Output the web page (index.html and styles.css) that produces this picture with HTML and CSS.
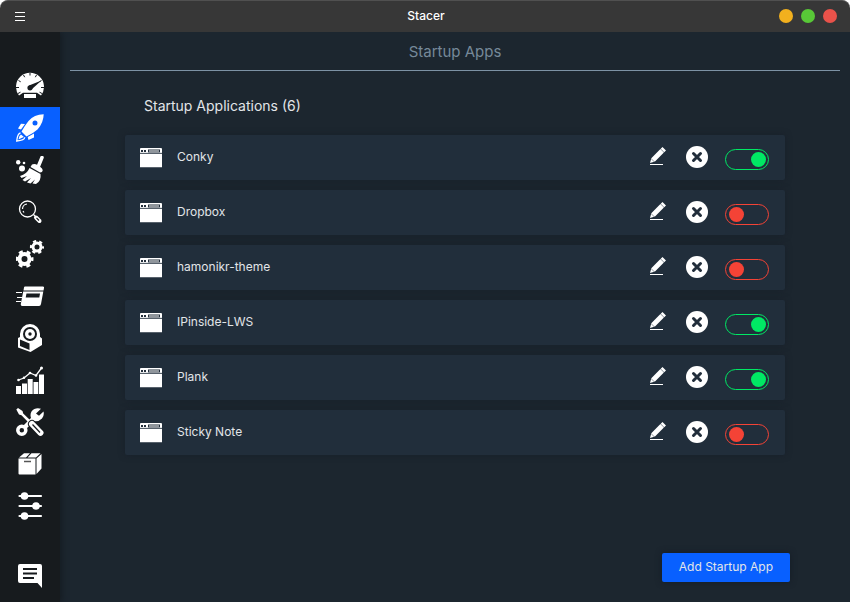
FILE: index.html
```html
<!DOCTYPE html>
<html lang="en">
<head>
<meta charset="utf-8">
<title>Stacer</title>
<link rel="stylesheet" href="styles.css">
</head>
<body>
<svg class="sprite" aria-hidden="true">
  <symbol id="window" viewBox="0 0 22 20">
    <path fill="#fff" d="M1 0H21Q22 0 22 1V5H0V1Q0 0 1 0ZM0 6H22V19H0Z"/>
    <path fill="#222e3b" d="M1 2h2v2H1zM4 2h2v2H4zM8 1.500h12v3H8z"/>
    <path fill="#fff" d="M9 2.500h10v1H9z"/>
    <path fill="#8d949b" d="M0 4.800h22v.7H0zM0 19h22v.6H0z"/>
  </symbol>
  <symbol id="pencil" viewBox="0 0 16 18">
    <path fill="#fff" d="M12.500 0 16 3.500 14.200 5.300 10.700 1.800ZM10.400 2.100 13.900 5.600 5 14.600 0 16 1.300 11.200ZM0 17h13v1H0z"/>
    <path stroke="#222e3b" stroke-width=".5" d="M1 11.500 4.500 15"/>
  </symbol>
  <symbol id="remove" viewBox="0 0 22 22">
    <circle cx="11" cy="11" r="11" fill="#fff"/>
    <path d="M7.500 7.500 14.500 14.500M14.500 7.500 7.500 14.500" stroke="#222e3b" stroke-width="3" stroke-linecap="round"/>
  </symbol>
</svg>
<header class="titlebar">
  <button class="menu" aria-label="Menu"><svg width="10" height="9" viewBox="0 0 10 9"><path d="M0 .5h10M0 4.500h10M0 8.500h10" stroke="#fff"/></svg></button>
  <h1>Stacer</h1>
  <div class="controls">
    <button class="dot minimize" aria-label="Minimize"></button>
    <button class="dot maximize" aria-label="Maximize"></button>
    <button class="dot close" aria-label="Close"></button>
  </div>
</header>
<div class="app">
  <nav class="sidebar">
    <a href="#" aria-label="Dashboard"><svg viewBox="0 0 28 28">
      <path fill="#fff" d="M3 23.500A14 14 0 1 1 25 23.500L21 20.800H7Z"/>
      <path fill="#fff" d="M8 22h12v4H8z"/>
      <path stroke="#171b1e" fill="none" d="M14 1v2.500M7.500 3l1.200 2.200M20.500 3l-1.200 2.200M2.500 8.500l2.200 1.300M25.500 8.500l-2.200 1.300M0 15.500h3M25 15.500h3M2 21.500l2.500-1.300M26 21.500l-2.500-1.300"/>
      <path fill="#171b1e" d="M13 13.500 25.500 8.500 16 17Z"/><circle cx="14" cy="15.800" r="2.600" fill="#171b1e"/>
    </svg></a>
    <a href="#" class="active" aria-label="Startup Apps" aria-current="page"><svg viewBox="0 0 28 28">
      <path fill="#fff" fill-rule="evenodd" d="M27.700.3Q18 .5 12.500 7Q8.500 12 5.500 17.500L10.500 22.500Q17 19.500 21.500 15.500Q27.500 9 27.700.3ZM19 6.500a2.500 2.500 0 1 1 0 5a2.500 2.500 0 1 1 0-5Z"/>
      <path fill="#fff" d="M9 10 5 9.700 2 14.500 5 15.500ZM18 19.500V23.500L12.500 26 11.700 23Z"/>
      <path fill="none" stroke="#fff" stroke-width="1.300" d="M4.500 19Q1.500 19.500.7 27Q8.500 26.500 8.800 23.300"/>
      <path fill="#fff" d="M5 20.500 8 23 5.500 24 2.500 25.500 3.500 22Z"/>
    </svg></a>
    <a href="#" aria-label="System Cleaner"><svg viewBox="0 0 28 28">
      <path d="M26 1.500 22.500 10" stroke="#fff" stroke-width="3.500" stroke-linecap="round"/>
      <path fill="#fff" d="M16 8.500Q20 6.500 26 12.500Q27.500 14 26 16L24 16.500 14.500 11ZM13.500 12 24.500 18Q25.500 25 20 28L16.500 27.500 19 23.500 14.500 27.500 11 26.500 15 22 9 25.500 6.500 24 11 20 5.500 22 4 20Q11 18 13.500 12Z"/>
      <circle cx="2.200" cy="6.200" r="2.200" fill="#fff"/><circle cx="8" cy="7" r="1.300" fill="#fff"/><circle cx="6" cy="12.500" r="3" fill="#fff"/>
    </svg></a>
    <a href="#" aria-label="Search"><svg viewBox="0 0 28 28">
      <circle cx="11.500" cy="11" r="8" fill="none" stroke="#fff" stroke-width="1.300"/>
      <path d="M6.500 11a5 5 0 0 1 4.500-5M7 13l1 1.500M17.500 16.500l2 2" fill="none" stroke="#fff" stroke-width="1.200"/>
      <path d="M20 19.500 23.500 23" stroke="#fff" stroke-width="4" stroke-linecap="round"/><path d="M20.500 19.800 23 22.500" stroke="#171b1e" stroke-width="1.200"/>
    </svg></a>
    <a href="#" aria-label="Services"><svg viewBox="0 0 28 28">
      <g fill="none" stroke="#fff"><circle cx="8.500" cy="19" r="5" stroke-width="4"/><circle cx="8.500" cy="19" r="7.500" stroke-width="3" stroke-dasharray="3.930 3.924" stroke-dashoffset="-5.900"/>
      <circle cx="21" cy="7" r="4" stroke-width="3"/><circle cx="21" cy="7" r="6" stroke-width="2.200" stroke-dasharray="3.150 3.133" stroke-dashoffset="-4.700"/></g>
    </svg></a>
    <a href="#" aria-label="Processes"><svg viewBox="0 0 28 28">
      <path fill="#fff" d="M9 4.500H27Q28.500 4.500 28 6L27.500 8.500H7.500L8 5.500Q8.200 4.500 9 4.500ZM7.200 9.500H27.300L25 22Q24.700 24 23 24H6Q4.500 24 4.800 22Z"/>
      <path fill="#171b1e" d="M10.500 11.500H24L23.300 15.500H9.700Z"/>
      <path stroke="#fff" d="M0 10.500h6M1 15.500h5M0 19.500h5"/>
    </svg></a>
    <a href="#" aria-label="Uninstaller"><svg viewBox="0 0 28 28">
      <path fill="#fff" d="M4 13V10a10 10 0 0 1 20 0v3l2 1.500V21l-11.500 7L2 23.500V14Z"/>
      <circle cx="14" cy="10" r="7" fill="#171b1e"/><circle cx="14" cy="10" r="5" fill="#fff"/><circle cx="14" cy="10" r="1.700" fill="#171b1e"/>
      <path fill="#fff" d="M3 14 14 18.500 25 13.500 23 20 14 25Z"/><path fill="#171b1e" d="M4 15.500 13.500 19.500V26L4 22Z"/>
    </svg></a>
    <a href="#" aria-label="Resources"><svg viewBox="0 0 28 28">
      <path fill="#fff" d="M0 20h5v8H0zM6 17.500h5V28H6zM11.700 13h5v15h-5zM17.500 16h4.800v12h-4.800zM23 8.500h5V28h-5z"/>
      <path fill="none" stroke="#fff" stroke-width="1.300" d="M2.500 14 8 12 14 7 20 9.500 25.500 2"/>
      <g fill="#fff"><circle cx="2.500" cy="14" r="1.300"/><circle cx="8" cy="11.800" r="1.200"/><circle cx="14" cy="7" r="1.300"/><circle cx="20" cy="9.500" r="1.300"/><circle cx="25.500" cy="2" r="1.500"/></g>
    </svg></a>
    <a href="#" aria-label="Helpers"><svg viewBox="0 0 28 28">
      <path d="M8 20 20 8" stroke="#fff" stroke-width="4.500"/>
      <circle cx="5.800" cy="22.200" r="4" fill="none" stroke="#fff" stroke-width="3.500"/>
      <path fill="#fff" d="M25 .7Q19 -1 15.500 3.500Q13.500 7 15.500 11L18 13Q22.500 14 26 10.500Q28.500 7.500 27.500 3.500L23 7.800 20 5.500Z"/>
      <path fill="#fff" d="M.3 1.500 2 0 6.500 3 7.200 5.500 14 12 12 14 5.500 7.200 3 6.500Z"/>
      <path d="M16 16 24.500 24.800" stroke="#171b1e" stroke-width="8" stroke-linecap="round"/>
      <path d="M16 16 24.500 24.800" stroke="#fff" stroke-width="6" stroke-linecap="round"/>
      <path d="M16.500 16.500 24 24.500" stroke="#171b1e" stroke-width="1.200"/>
    </svg></a>
    <a href="#" aria-label="Package Manager"><svg viewBox="0 0 28 28">
      <path fill="#fff" d="M2.500 8.500H19.500V24.500H3.500Q2.500 24.500 2.500 23.500ZM20.500 8.500 25.500 4V18.500L20.500 24ZM3 7.500 8 3.200H14L10 7.500ZM15.500 3.200H24.500L20 7.500H11.500Z"/>
      <path stroke="#555" stroke-width="1.500" d="M8 11.500h7"/>
    </svg></a>
    <a href="#" aria-label="Settings"><svg viewBox="0 0 28 28">
      <path stroke="#fff" stroke-width="2.200" stroke-linecap="round" d="M3.500 4H25M3.500 14H25M3.500 24H25"/>
      <circle cx="8.500" cy="4" r="3.800" fill="#fff"/><circle cx="20" cy="14" r="3.800" fill="#fff"/><circle cx="8.500" cy="24" r="3.800" fill="#fff"/>
    </svg></a>
    <a href="#" class="feedback" aria-label="Feedback"><svg viewBox="0 0 28 28">
      <path fill="#fff" d="M4 3H24Q26 3 26 5V27L21.500 22H4Q2 22 2 20V5Q2 3 4 3Z"/>
      <path stroke="#171b1e" stroke-width="2" d="M7 8h14M7 12.500h14M7 17h11"/>
    </svg></a>
  </nav>
  <main>
    <h2>Startup Apps</h2>
    <section class="content">
      <h3>Startup Applications (6)</h3>
      <ul>
        <li><svg class="window"><use href="#window"/></svg><label for="a1">Conky</label><button class="edit" aria-label="Edit Conky"><svg><use href="#pencil"/></svg></button><button class="remove" aria-label="Remove Conky"><svg><use href="#remove"/></svg></button><input id="a1" type="checkbox" checked></li>
        <li><svg class="window"><use href="#window"/></svg><label for="a2">Dropbox</label><button class="edit" aria-label="Edit Dropbox"><svg><use href="#pencil"/></svg></button><button class="remove" aria-label="Remove Dropbox"><svg><use href="#remove"/></svg></button><input id="a2" type="checkbox"></li>
        <li><svg class="window"><use href="#window"/></svg><label for="a3">hamonikr-theme</label><button class="edit" aria-label="Edit hamonikr-theme"><svg><use href="#pencil"/></svg></button><button class="remove" aria-label="Remove hamonikr-theme"><svg><use href="#remove"/></svg></button><input id="a3" type="checkbox"></li>
        <li><svg class="window"><use href="#window"/></svg><label for="a4">IPinside-LWS</label><button class="edit" aria-label="Edit IPinside-LWS"><svg><use href="#pencil"/></svg></button><button class="remove" aria-label="Remove IPinside-LWS"><svg><use href="#remove"/></svg></button><input id="a4" type="checkbox" checked></li>
        <li><svg class="window"><use href="#window"/></svg><label for="a5">Plank</label><button class="edit" aria-label="Edit Plank"><svg><use href="#pencil"/></svg></button><button class="remove" aria-label="Remove Plank"><svg><use href="#remove"/></svg></button><input id="a5" type="checkbox" checked></li>
        <li><svg class="window"><use href="#window"/></svg><label for="a6">Sticky Note</label><button class="edit" aria-label="Edit Sticky Note"><svg><use href="#pencil"/></svg></button><button class="remove" aria-label="Remove Sticky Note"><svg><use href="#remove"/></svg></button><input id="a6" type="checkbox"></li>
      </ul>
    </section>
    <button class="add">Add Startup App</button>
  </main>
</div>
</body>
</html>
```
FILE: styles.css
```css
* { box-sizing: border-box; }
html { background: #fff; }
body {
  margin: 0;
  min-height: 100vh;
  display: flex;
  flex-direction: column;
  font: 12px/20px Inter, "Noto Sans", sans-serif;
  color: #e2e5e8;
}
h1, h2, h3, ul { margin: 0; padding: 0; }
button { border: 0; padding: 0; background: none; font: inherit; color: inherit; }
svg { display: block; }
.sprite { position: absolute; width: 0; height: 0; }

.titlebar {
  height: 32px;
  display: grid;
  grid-template-columns: 1fr auto 1fr;
  align-items: center;
  padding: 0 13px 1px 15px;
  background: #373737;
  border-top: 1px solid #505050;
  border-radius: 8px 8px 0 0;
}
.titlebar h1 { font-size: 12px; font-weight: 500; color: #fff; }
.menu { justify-self: start; }
.controls { justify-self: end; display: flex; gap: 8px; }
.dot { width: 14px; height: 14px; border-radius: 50%; }
.minimize { background: #f2b01e; }
.maximize { background: #58c837; }
.close { background: #e9524a; }

.app { flex: 1; display: flex; background: #1c262f; }
.sidebar {
  width: 60px;
  display: flex;
  flex-direction: column;
  padding: 33px 0 6px;
  background: #171b1e;
  box-shadow: 2px 0 6px #151c22;
  clip-path: inset(0 -10px 0 0);
}
.sidebar a { height: 42px; display: grid; place-items: center; }
.sidebar svg { width: 28px; height: 28px; }
.sidebar .active { background: #0860ff; }
.sidebar .feedback { margin-top: auto; }

main { flex: 1; display: flex; flex-direction: column; padding: 0 10px 20px; }
h2 {
  height: 39px;
  border-bottom: 1px solid #7d92a5;
  font-size: 15px;
  font-weight: 400;
  line-height: 40px;
  text-align: center;
  color: #768999;
}
.content { padding: 25px 55px 0; }
h3 { padding-left: 19px; font-size: 14px; font-weight: 400; }
ul { display: grid; gap: 10px; margin-top: 19px; list-style: none; }
li {
  height: 45px;
  display: flex;
  align-items: center;
  padding: 0 16px 1px 15px;
  background: #212e3b;
  border-radius: 2px;
  box-shadow: 0 0 6px #18202a;
}
.window { width: 22px; height: 20px; margin-top: 2px; }
label { flex: 1; margin-left: 15px; }
.edit { padding-bottom: 2px; }
.edit svg { width: 16px; height: 18px; }
.remove { margin: 0 17px 0 20px; }
.remove svg { width: 22px; height: 22px; }
input {
  appearance: none;
  width: 44px;
  height: 21px;
  margin: 5px 0 0;
  padding: 2px;
  display: flex;
  border: 1px solid #f44336;
  border-radius: 11px;
  color: #f44336;
}
input::before {
  content: "";
  width: 15px;
  height: 15px;
  margin-left: 1px;
  border-radius: 50%;
  background: currentColor;
}
input:checked { justify-content: flex-end; color: #00e864; border-color: #00e864; }
.add {
  align-self: flex-end;
  height: 29px;
  margin: auto 50px 0 0;
  padding: 0 17px 1px;
  background: #0860ff;
  border-radius: 2px;
  box-shadow: 0 0 6px #151c25;
}
```
